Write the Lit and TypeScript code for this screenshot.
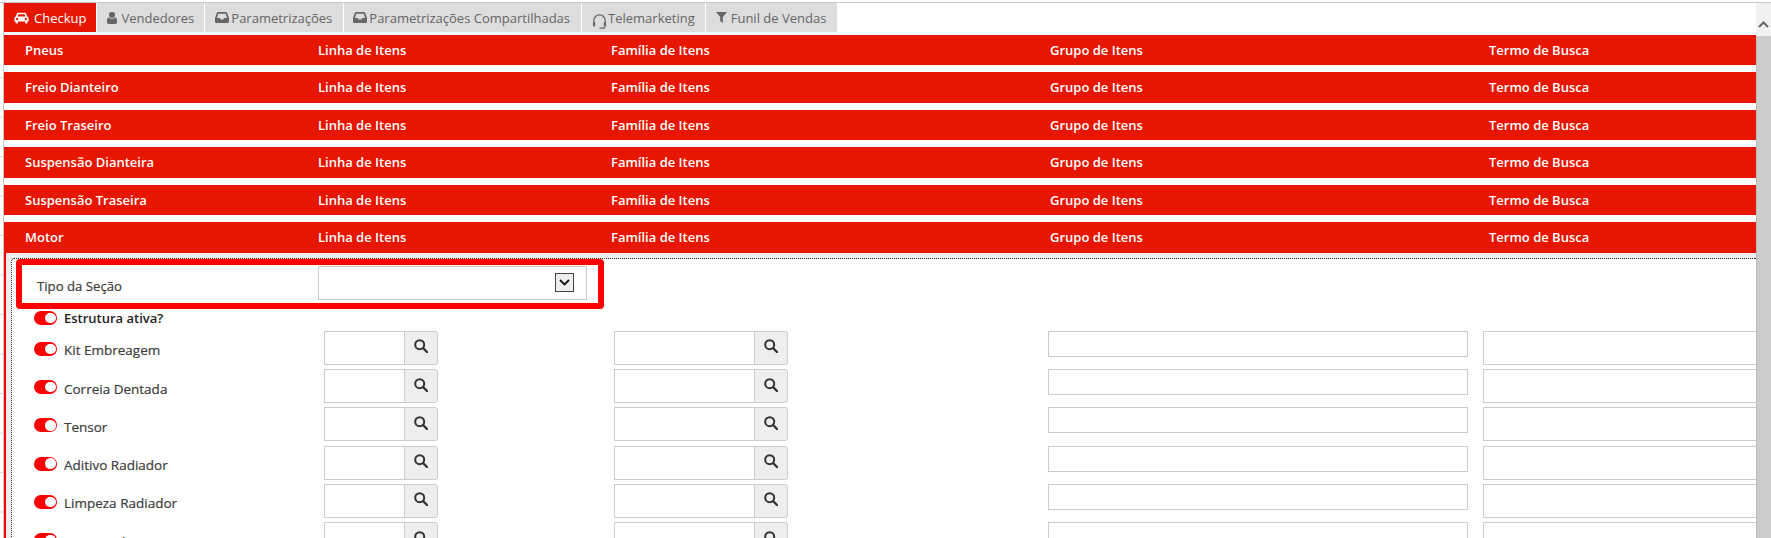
import { LitElement, html, css, svg } from "lit";
import { customElement } from "lit/decorators.js";

const carIcon = html`<svg class="ic" width="15" height="12" viewBox="0 0 19 15" preserveAspectRatio="none"><path fill-rule="evenodd" fill="currentColor" d="M5.2 1h8.6c.7 0 1.3.4 1.5 1l1.4 3.6c1 .4 1.8 1.3 1.8 2.4v3.2c0 .4-.3.8-.8.8h-.7v1.200c0 .7-.5 1.300-1.200 1.300h-.6c-.7 0-1.200-.6-1.200-1.300V12H5v1.200c0 .7-.5 1.300-1.200 1.300h-.6c-.7 0-1.200-.6-1.200-1.300V12h-.7c-.5 0-.8-.4-.8-.8V8c0-1.100.8-2 1.800-2.400L3.700 2c.2-.6.8-1 1.500-1zM5.600 2.800 4.500 5.600h10l-1.100-2.800zM4 7.200a1.500 1.500 0 1 0 0 3 1.500 1.500 0 0 0 0-3zm11 0a1.500 1.500 0 1 0 0 3 1.500 1.500 0 0 0 0-3z"/></svg>`;
const userIcon = html`<svg class="ic" width="10" height="12" viewBox="0 0 10 12"><circle cx="5" cy="3" r="3" fill="currentColor"/><path fill="currentColor" d="M1.800 5.600C2.600 6.400 3.700 7 5 7s2.400-.6 3.200-1.400C9.400 5.800 10 7.200 10 9v1.300c0 1-.7 1.700-1.600 1.700H1.600C.7 12 0 11.300 0 10.300V9c0-1.800.6-3.200 1.800-3.400z"/></svg>`;
const inboxIcon = html`<svg class="ic" width="14" height="11" viewBox="0 0 14 11"><path fill-rule="evenodd" fill="currentColor" d="M3 0h8c.5 0 .9.3 1.100.7L14 6v3.500c0 .8-.6 1.500-1.400 1.500H1.400C.6 11 0 10.300 0 9.500V6L1.900.7C2.100.3 2.500 0 3 0zm.3 1.700L1.900 6h3l.8 1.600h2.600L9.100 6h3l-1.400-4.300z"/></svg>`;
const headsetIcon = html`<svg class="ic headset" width="15" height="16" viewBox="0 0 15 16"><path fill="none" stroke="currentColor" stroke-width="1.200" d="M1.800 10V7.500a5.700 5.700 0 0 1 11.400 0V10"/><rect x="1" y="9" width="2.200" height="4.500" rx="1" fill="currentColor"/><rect x="11.800" y="9" width="2.200" height="4.500" rx="1" fill="currentColor"/><path fill="none" stroke="currentColor" stroke-width="1.200" d="M13 13.500c0 1-1 1.700-2.500 1.700H7.500"/></svg>`;
const filterIcon = html`<svg class="ic" width="11" height="11" viewBox="0 0 11 11"><path fill="currentColor" d="M0 0h11L6.800 5v6L4.200 9V5z"/></svg>`;
const searchIcon = svg`<svg width="14" height="14" viewBox="0 0 14 14"><circle cx="5.700" cy="5.700" r="4.500" fill="none" stroke="#333" stroke-width="2"/><path d="M9 9l4 4" stroke="#333" stroke-width="2.400" stroke-linecap="round"/></svg>`;

const tabs = [
  { icon: carIcon, label: "Checkup", cls: "active car" },
  { icon: userIcon, label: "Vendedores", cls: "" },
  { icon: inboxIcon, label: "Parametrizações", cls: "tray" },
  { icon: inboxIcon, label: "Parametrizações Compartilhadas", cls: "tray shared" },
  { icon: headsetIcon, label: "Telemarketing", cls: "tight" },
  { icon: filterIcon, label: "Funil de Vendas", cls: "funnel" },
];
const sections = ["Pneus", "Freio Dianteiro", "Freio Traseiro", "Suspensão Dianteira", "Suspensão Traseira", "Motor"];
const items = ["Kit Embreagem", "Correia Dentada", "Tensor", "Aditivo Radiador", "Limpeza Radiador", "Sistema de Injeção"];

@customElement("app-root")
export class AppRoot extends LitElement {
  static styles = css`
    :host { display: block; width: 1771px; height: 538px; overflow: hidden; background: #fff; font-family: "Open Sans", sans-serif; font-size: 13px; }
    .page { display: flex; height: 535px; margin-top: 2px; border-top: 1px solid #c8c8c8; }
    .gutter { width: 3px; flex: none; margin-top: 74px; background: linear-gradient(to bottom, #ddd 1px, transparent 1px) 0 0 / 3px 39.500px; }
    .main { width: 1753px; flex: none; border-left: 1px solid #c8c8c8; box-sizing: border-box; overflow: hidden; }
    .tabs { display: flex; gap: 1px; height: 29px; margin-bottom: 3px; }
    .tab { display: flex; align-items: center; gap: 4px; padding: 0 10px; background: #ddd; color: #666; white-space: nowrap; }
    .tab.active { background: #e71600; color: #fff; }
    .tab.car { gap: 5px; }
    .tab.tray { gap: 2px; padding-right: 11px; }
    .tab.shared { padding-left: 9px; }
    .tab.tight { gap: 1px; }
    .tab.funnel { padding-right: 11px; }
    .ic { flex: none; display: block; }
    .headset { margin-top: 6px; }
    .row { display: grid; grid-template-columns: 293px 293px 439px 439px 1fr; align-items: center; box-sizing: border-box; height: 30.400px; margin-bottom: 7px; padding: 0 0 0.300px 21px; background: #e71600; color: #fff; font-weight: 600; }
    .row.last { height: 31px; margin-bottom: 0; padding-bottom: 0; }
    .panel { border-left: 2px solid #f00; background: #eee; padding: 5px 0 0 5px; }
    .inner { border: 1px dotted #222; border-right: 0; border-bottom: 0; border-radius: 3px 0 0 0; background: #fff; height: 300px; }
    .section-type { display: flex; align-items: center; box-sizing: border-box; width: 588px; height: 50px; margin-left: 4px; border: 6px solid #f00; border-radius: 4px; padding-left: 15px; color: #3c3c3c; font-size: 13.200px; -webkit-text-stroke: 0.200px #3c3c3c; }
    .section-type .lbl { width: 281px; padding-top: 5px; }
    .select { display: flex; align-items: center; justify-content: flex-end; box-sizing: border-box; width: 269px; height: 34px; margin-top: -2px; padding-right: 12px; border: 1px solid #ccc; }
    .arrow { display: flex; align-items: center; justify-content: center; box-sizing: border-box; width: 19px; height: 19px; background: #eee; border: 1px solid #444; }
    .toggle-row { display: flex; align-items: center; gap: 7px; }
    .active-row { height: 18px; margin: 0 0 4px 22px; color: #222; font-weight: 600; }
    .toggle { flex: none; display: flex; justify-content: flex-end; align-items: center; box-sizing: border-box; width: 23px; height: 14px; padding-right: 1.500px; background: #f00; border-radius: 7px; }
    .toggle i { display: block; width: 10.500px; height: 10.500px; background: #fff; border-radius: 50%; }
    .item { display: grid; grid-template-columns: 290px 290px 434px 435px 274px; height: 38.250px; margin-left: 22px; align-items: start; }
    .item .toggle-row { height: 34px; color: #3c3c3c; font-size: 13.500px; -webkit-text-stroke: 0.200px #3c3c3c; }
    .item .toggle { margin-top: 2px; }
    .item .name { padding-top: 5px; }
    .lookup { display: flex; height: 34px; }
    .lookup.a { width: 114px; }
    .lookup.b { width: 174px; }
    input { display: block; box-sizing: border-box; margin: 0; padding: 0; min-width: 0; border: 1px solid #ccc; border-radius: 0; background: #fff; outline: none; }
    .lookup input { flex: 1; height: 34px; }
    .btn { flex: none; display: flex; align-items: center; justify-content: center; box-sizing: border-box; width: 34px; height: 34px; margin-left: -1px; padding-bottom: 3px; background: #eee; border: 1px solid #ccc; border-radius: 0 3px 3px 0; }
    .group { width: 420px; height: 26px; }
    .term { width: 274px; height: 34px; }
    .scroll { width: 15px; flex: none; display: flex; flex-direction: column; }
    .up { display: flex; justify-content: center; height: 33px; padding-top: 18px; box-sizing: border-box; background: #f1f1f1; }
    .thumb { flex: 1; background: #ccc; border-left: 1px solid #bbb; }
  `;

  render() {
    return html`<div class="page">
      <div class="gutter"></div>
      <div class="main">
        <div class="tabs">
          ${tabs.map((t) => html`<div class="tab ${t.cls}">${t.icon}<span>${t.label}</span></div>`)}
        </div>
        ${sections.map((s, i) => html`<div class="row ${i === sections.length - 1 ? "last" : ""}">
          <span>${s}</span><span>Linha de Itens</span><span>Família de Itens</span><span>Grupo de Itens</span><span>Termo de Busca</span>
        </div>`)}
        <div class="panel">
          <div class="inner">
            <div class="section-type">
              <span class="lbl">Tipo da Seção</span>
              <div class="select"><div class="arrow"><svg width="11" height="7" viewBox="0 0 11 7"><path d="M1 1l4.500 4.500L10 1" fill="none" stroke="#111" stroke-width="1.800"/></svg></div></div>
            </div>
            <div class="toggle-row active-row"><span class="toggle"><i></i></span><span>Estrutura ativa?</span></div>
            ${items.map((n) => html`<div class="item">
              <div class="toggle-row"><span class="toggle"><i></i></span><span class="name">${n}</span></div>
              <div class="lookup a"><input /><div class="btn">${searchIcon}</div></div>
              <div class="lookup b"><input /><div class="btn">${searchIcon}</div></div>
              <input class="group" />
              <input class="term" />
            </div>`)}
          </div>
        </div>
      </div>
      <div class="scroll">
        <div class="up"><svg width="11" height="7" viewBox="0 0 11 7"><path d="M1 6l4.500-4.500L10 6" fill="none" stroke="#666" stroke-width="2"/></svg></div>
        <div class="thumb"></div>
      </div>
    </div>`;
  }
}
